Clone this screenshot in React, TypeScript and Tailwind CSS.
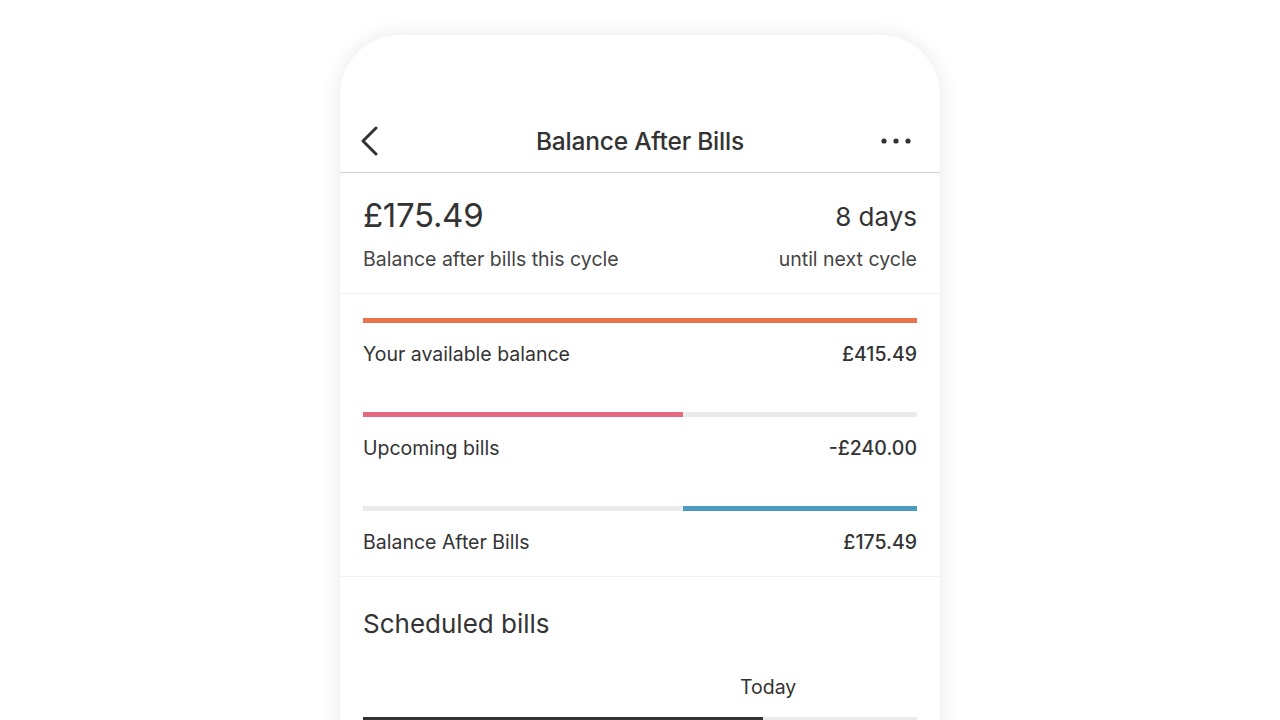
export default function App() {
  const available = 415.49;
  const bills = 240;
  const billsPct = (bills / available) * 100;

  return (
    <div
      className="h-screen overflow-hidden bg-white pt-[35px]"
      style={{ fontFamily: 'Inter, "Noto Sans", sans-serif' }}
    >
      <div className="mx-auto w-[600px] h-[740px] rounded-t-[60px] bg-white shadow-[0_0_22px_rgba(0,0,0,0.09)] text-[#333]">
        {/* Header */}
        <div className="pt-[74px]">
          <div className="flex h-[64px] items-center border-b border-[#cfcfcf] px-[20px]">
            <div className="w-[70px]">
              <svg width="20" height="30" viewBox="0 0 20 30" fill="none">
                <path d="M16 2 L3 15 L16 28" stroke="#333" strokeWidth="3" strokeLinecap="round" strokeLinejoin="round" />
              </svg>
            </div>
            <h1 className="flex-1 text-center text-[24.5px] font-medium tracking-[-0.2px] pt-[2px]">Balance After Bills</h1>
            <div className="flex w-[70px] justify-end">
              <svg width="32" height="8" viewBox="0 0 32 8" className="mr-[8px]">
                <circle cx="4" cy="4" r="2.6" fill="#333" />
                <circle cx="16" cy="4" r="2.6" fill="#333" />
                <circle cx="28" cy="4" r="2.6" fill="#333" />
              </svg>
            </div>
          </div>
        </div>

        {/* Summary */}
        <div className="border-b border-[#f0f0f0] px-[23px] pt-[23px] pb-[21px]">
          <div className="flex items-center justify-between h-[40px]">
            <span className="text-[33px] tracking-[-0.3px]">£175.49</span>
            <span className="text-[26px]">8 days</span>
          </div>
          <div className="mt-[12px] flex h-[24px] items-center justify-between text-[19.5px] text-[#444]">
            <span>Balance after bills this cycle</span>
            <span>until next cycle</span>
          </div>
        </div>

        {/* Breakdown */}
        <div className="border-b border-[#f0f0f0] px-[23px] pt-[24px] pb-[21px]">
          <div className="h-[5px] w-full bg-[#e8724a]" />
          <div className="mt-[20px] flex h-[24px] items-center justify-between text-[19.5px]">
            <span>Your available balance</span>
            <span className="font-medium">£415.49</span>
          </div>

          <div className="mt-[45px] flex h-[5px] w-full bg-[#ebebeb]">
            <div className="h-full bg-[#e2697e]" style={{ width: `${billsPct}%` }} />
          </div>
          <div className="mt-[20px] flex h-[24px] items-center justify-between text-[19.5px]">
            <span>Upcoming bills</span>
            <span className="font-medium">-£240.00</span>
          </div>

          <div className="mt-[45px] flex h-[5px] w-full bg-[#ebebeb]">
            <div className="h-full" style={{ width: `${billsPct}%` }} />
            <div className="h-full flex-1 bg-[#4a9bbe]" />
          </div>
          <div className="mt-[20px] flex h-[24px] items-center justify-between text-[19.5px]">
            <span>Balance After Bills</span>
            <span className="font-medium">£175.49</span>
          </div>
        </div>

        {/* Scheduled bills */}
        <div className="px-[23px] pt-[30px]">
          <h2 className="flex h-[32px] items-center text-[26px]">Scheduled bills</h2>
          <div className="mt-[37px] flex h-[24px] items-center pl-[377px] text-[19.5px]">Today</div>
          <div className="mt-[17px] flex h-[5px] w-full bg-[#ebebeb]">
            <div className="h-full w-[400px] bg-[#333]" />
          </div>
        </div>
      </div>
    </div>
  );
}
